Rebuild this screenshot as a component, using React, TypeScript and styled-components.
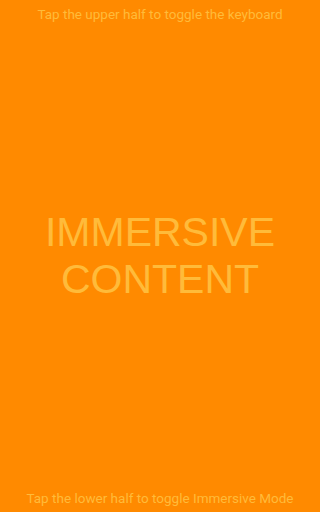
import React from "react";
import styled, { createGlobalStyle } from "styled-components";

const GlobalStyle = createGlobalStyle`
  html, body {
    margin: 0;
    padding: 0;
    height: 100%;
    background: #ff8a00;
  }
  #root {
    height: 100%;
  }
`;

const Screen = styled.div`
  height: 512px;
  width: 100%;
  display: flex;
  flex-direction: column;
  background: #ff8a00;
  color: #ffbb3a;
  overflow: hidden;
`;

const Hint = styled.div`
  font-family: Roboto, "Noto Sans", sans-serif;
  font-size: 13.5px;
  line-height: 16px;
  text-align: center;
  white-space: nowrap;
  padding: 6px 0;
`;

const Content = styled.div`
  flex: 1;
  display: flex;
  align-items: center;
  justify-content: center;
  text-align: center;
  font-family: "Liberation Sans", Arial, sans-serif;
  font-size: 41px;
  line-height: 47px;
`;

export default function App() {
  return (
    <>
      <GlobalStyle />
      <Screen>
        <Hint>Tap the upper half to toggle the keyboard</Hint>
        <Content>
          IMMERSIVE
          <br />
          CONTENT
        </Content>
        <Hint>Tap the lower half to toggle Immersive Mode</Hint>
      </Screen>
    </>
  );
}
